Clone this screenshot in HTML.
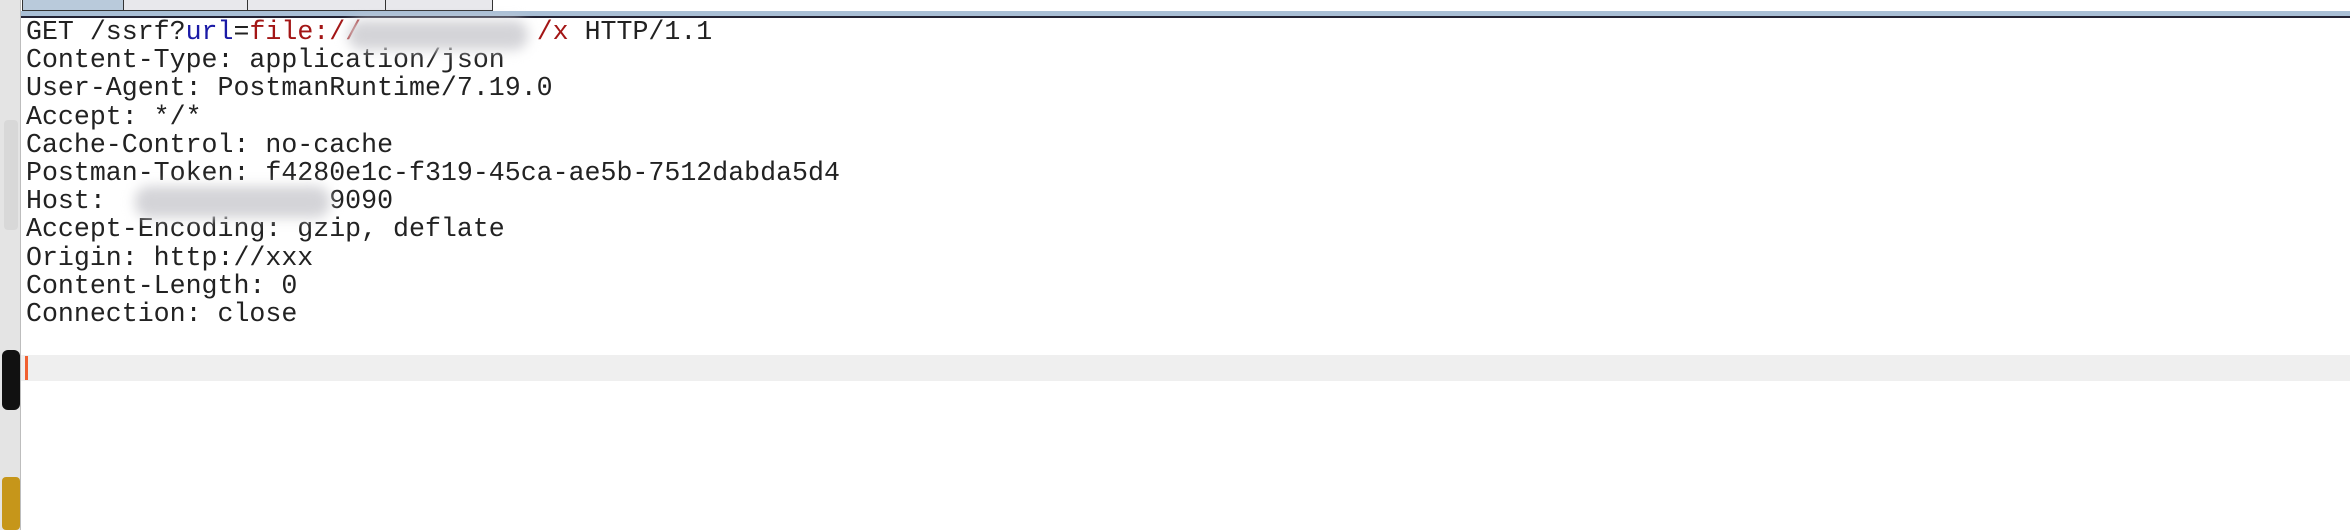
<!DOCTYPE html>
<html><head><style>
body{margin:0;width:2350px;height:530px;overflow:hidden;background:#fff;position:relative;font-family:"Liberation Mono",monospace}
#left{position:absolute;left:0;top:0;width:20px;height:530px;background:#e4e4e4;border-right:1px solid #bdbdbd}
#tabs{position:absolute;left:21px;top:0;width:2329px;height:12px;background:#fff}
.tab{position:absolute;top:0;height:10px;border:1px solid #333;border-top:none;background:#e8e8ec}
#bar{position:absolute;left:21px;top:11px;width:2329px;height:5px;background:#a9bfd6;border-bottom:2px solid #223}
pre{position:absolute;left:26px;top:18px;margin:0;font-size:26.6px;line-height:28.2px;color:#222;font-family:"Liberation Mono",monospace}
.b{color:#1a1aa6}.r{color:#a31515}
.blur{position:absolute;background:#d4d4d8;filter:blur(6px);border-radius:14px}
#cur{position:absolute;left:21px;top:355px;width:2329px;height:26px;background:#efefef}
#caret{position:absolute;left:25px;top:356px;width:3px;height:24px;background:#f06030}
</style></head><body>
<div id="left">
<div style="position:absolute;left:4px;top:120px;width:14px;height:110px;background:#d8d8d8;border-radius:4px"></div>
<div style="position:absolute;left:2px;top:350px;width:18px;height:60px;background:#111;border-radius:6px"></div>
<div style="position:absolute;left:2px;top:477px;width:18px;height:53px;background:#c6961a;border-radius:4px"></div>
</div>
<div id="tabs">
<div class="tab" style="left:1px;width:100px;background:#b9cadb"></div>
<div class="tab" style="left:102px;width:123px"></div>
<div class="tab" style="left:226px;width:137px"></div>
<div class="tab" style="left:364px;width:106px"></div>
</div>
<div id="bar"></div>
<div id="cur"></div><div id="caret"></div>
<pre>GET /ssrf?<span class="b">url</span>=<span class="r">file://           /x</span> HTTP/1.1
Content-Type: application/json
User-Agent: PostmanRuntime/7.19.0
Accept: */*
Cache-Control: no-cache
Postman-Token: f4280e1c-f319-45ca-ae5b-7512dabda5d4
Host:              9090
Accept-Encoding: gzip, deflate
Origin: http://xxx
Content-Length: 0
Connection: close</pre>
<div class="blur" style="left:348px;top:20px;width:180px;height:30px"></div>
<div class="blur" style="left:135px;top:186px;width:195px;height:32px"></div>
</body></html>
